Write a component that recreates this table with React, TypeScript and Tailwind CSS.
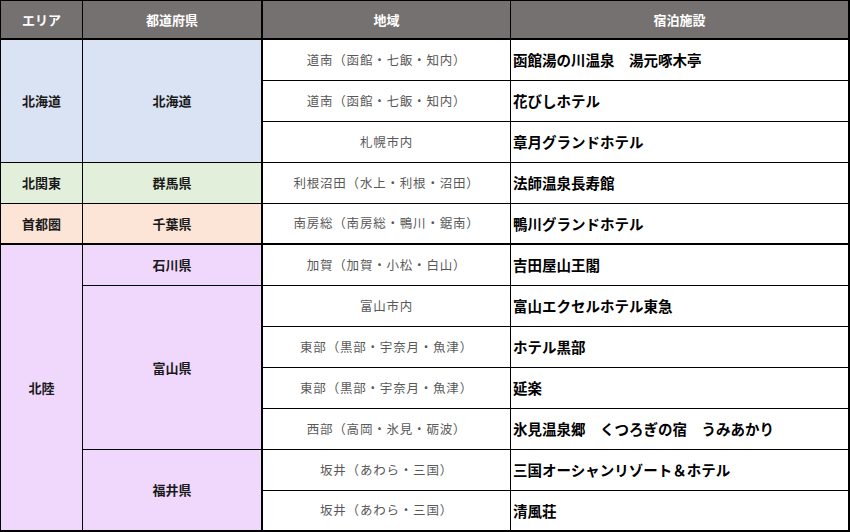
import React from "react";

const F = { fontFamily: '"Noto Sans CJK JP", "Noto Sans", sans-serif' };

type Row = {
  area?: [string, string, string];
  pref?: [string, string, string];
  region: string;
  hotel: string;
  bottom?: string;
};

const rows: Row[] = [
  { area: ["北海道", "row-span-3", "bg-[#dae3f3]"], pref: ["北海道", "row-span-3", "bg-[#dae3f3]"], region: "道南（函館・七飯・知内）", hotel: "函館湯の川温泉　湯元啄木亭" },
  { region: "道南（函館・七飯・知内）", hotel: "花びしホテル" },
  { region: "札幌市内", hotel: "章月グランドホテル" },
  { area: ["北関東", "row-span-1", "bg-[#e2efda]"], pref: ["群馬県", "row-span-1", "bg-[#e2efda]"], region: "利根沼田（水上・利根・沼田）", hotel: "法師温泉長寿館" },
  { area: ["首都圏", "row-span-1", "bg-[#fce4d6] border-b-2"], pref: ["千葉県", "row-span-1", "bg-[#fce4d6] border-b-2"], region: "南房総（南房総・鴨川・鋸南）", hotel: "鴨川グランドホテル", bottom: "border-b-2" },
  { area: ["北陸", "row-span-7", "bg-[#f0d8fc] border-b-2"], pref: ["石川県", "row-span-1", "bg-[#f0d8fc]"], region: "加賀（加賀・小松・白山）", hotel: "吉田屋山王閣" },
  { pref: ["富山県", "row-span-4", "bg-[#f0d8fc]"], region: "富山市内", hotel: "富山エクセルホテル東急" },
  { region: "東部（黒部・宇奈月・魚津）", hotel: "ホテル黒部" },
  { region: "東部（黒部・宇奈月・魚津）", hotel: "延楽" },
  { region: "西部（高岡・氷見・砺波）", hotel: "氷見温泉郷　くつろぎの宿　うみあかり" },
  { pref: ["福井県", "row-span-2", "bg-[#f0d8fc] border-b-2"], region: "坂井（あわら・三国）", hotel: "三国オーシャンリゾート＆ホテル" },
  { region: "坂井（あわら・三国）", hotel: "清風荘", bottom: "border-b-2" },
];

export default function App() {
  return (
    <div className="w-[850px] h-[532px] bg-white overflow-hidden" style={F}>
      <div className="grid grid-cols-[82px_180px_248px_339px] grid-rows-[39px_repeat(12,41px)] w-[850px] border-l border-t border-black">
        <div className="col-start-1 bg-[#767171] border-r border-b-2 border-black flex items-center justify-center text-white text-[13px] font-bold">エリア</div>
        <div className="col-start-2 bg-[#767171] border-r-2 border-b-2 border-black flex items-center justify-center text-white text-[13px] font-bold">都道府県</div>
        <div className="col-start-3 bg-[#767171] border-r border-b-2 border-black flex items-center justify-center text-white text-[13px] font-bold">地域</div>
        <div className="col-start-4 bg-[#767171] border-r-2 border-b-2 border-black flex items-center justify-center text-white text-[13px] font-bold">宿泊施設</div>
        {rows.map((r, i) => (
          <React.Fragment key={i}>
            {r.area && (
              <div className={`col-start-1 ${r.area[1]} ${r.area[2]} border-r border-b border-black flex items-center justify-center text-[13px] font-bold text-[#1a1a1a]`}>
                {r.area[0]}
              </div>
            )}
            {r.pref && (
              <div className={`col-start-2 ${r.pref[1]} ${r.pref[2]} border-r-2 border-b border-black flex items-center justify-center text-[13px] font-bold text-[#1a1a1a]`}>
                {r.pref[0]}
              </div>
            )}
            <div className={`col-start-3 border-r border-b ${r.bottom ?? ""} border-black flex items-center justify-center text-[12.5px] text-[#595959] tracking-[0.8px]`}>
              {r.region}
            </div>
            <div className={`col-start-4 border-r-2 border-b ${r.bottom ?? ""} border-black flex items-center pl-[2px] text-[14.5px] font-bold text-black`}>
              {r.hotel}
            </div>
          </React.Fragment>
        ))}
      </div>
    </div>
  );
}
